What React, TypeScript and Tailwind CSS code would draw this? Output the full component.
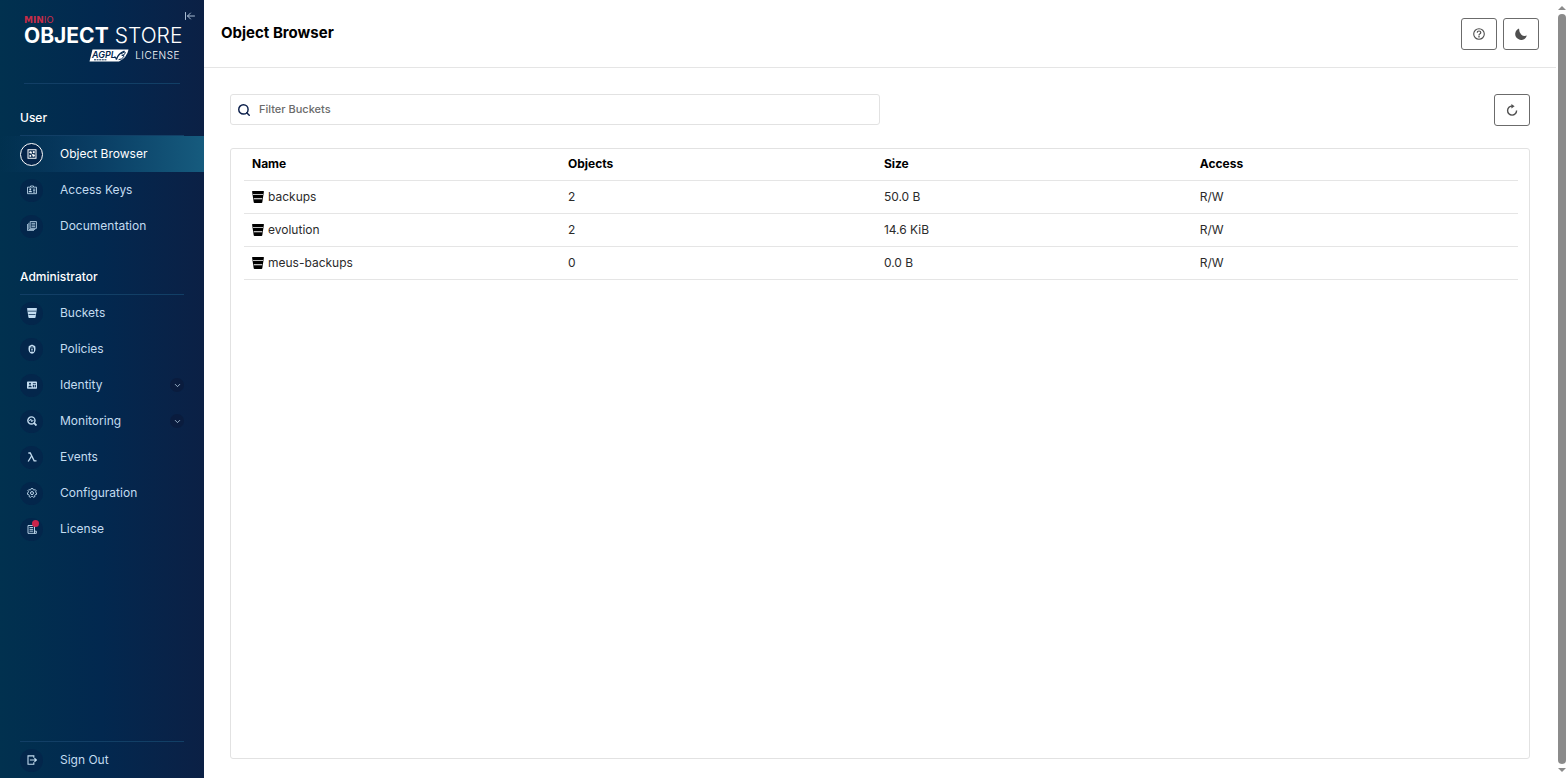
import React from "react";
import { ArrowLeftToLine, ChevronDown, Search } from "lucide-react";

type IconProps = { className?: string };

/* ── Icons ── */

function BucketIcon({ className }: IconProps) {
  return (
    <svg viewBox="0 0 12 12" className={className} fill="currentColor" aria-hidden="true">
      <path
        fillRule="evenodd"
        d="M0.6 0H11.4Q12 0 11.9 0.7L10.3 11.2Q10.2 12 9.4 12H2.6Q1.8 12 1.7 11.2L0.1 0.7Q0 0 0.6 0ZM1 3.2V4.1H11V3.2ZM1.8 7.3V8.2H10.2V7.3Z"
      />
    </svg>
  );
}

function ObjectBrowserIcon({ className }: IconProps) {
  return (
    <svg viewBox="0 0 12 12" className={className} fill="none" stroke="currentColor" aria-hidden="true">
      <rect x="1.2" y="0.9" width="9.6" height="10.2" strokeWidth="1.2" />
      <circle cx="4.3" cy="4" r="1.4" fill="currentColor" stroke="none" />
      <path d="M7 2.6H9.2V5H7Z" fill="currentColor" stroke="none" />
      <path d="M5 5.4L7.4 7.2" strokeWidth="1" />
      <circle cx="7.9" cy="7.9" r="1.5" fill="currentColor" stroke="none" />
      <path d="M3 7H5V9.4H3Z" fill="currentColor" stroke="none" />
    </svg>
  );
}

function AccessKeysIcon({ className }: IconProps) {
  return (
    <svg viewBox="0 0 12 12" className={className} fill="none" stroke="currentColor" aria-hidden="true">
      <path d="M0.6 2.6H4.2V1.2H7.8V2.6H11.4V10.4H0.6Z" strokeWidth="1" />
      <circle cx="3.9" cy="5.2" r="1.2" fill="currentColor" stroke="none" />
      <path d="M1.8 8.8Q1.8 6.7 3.9 6.7T6 8.8Z" fill="currentColor" stroke="none" />
      <path d="M5.2 3.2H6.8M7.2 5H10M7.2 6.8H10M7.2 8.6H10" strokeWidth="1" />
    </svg>
  );
}

function DocumentationIcon({ className }: IconProps) {
  return (
    <svg viewBox="0 0 12 12" className={className} fill="none" stroke="currentColor" aria-hidden="true">
      <path d="M3.8 0.7H11.3V8.8H3.8Z" strokeWidth="1" />
      <path d="M2.2 2.2V10.2H9.8" strokeWidth="0.9" />
      <path d="M0.6 3.6V11.5H8.4" strokeWidth="0.9" />
      <path d="M5.4 2.8H9.8M5.4 4.8H9.8M5.4 6.8H9.8" strokeWidth="1" />
    </svg>
  );
}

function PoliciesIcon({ className }: IconProps) {
  return (
    <svg viewBox="0 0 12 12" className={className} aria-hidden="true">
      <path
        fill="currentColor"
        fillRule="evenodd"
        d="M6 0.6C7.2 1.6 8.6 1.8 9.8 2.4C10.8 6 10.2 9.8 7.8 11.2Q6 12 4.2 11.2C1.8 9.8 1.2 6 2.2 2.4C3.4 1.8 4.8 1.6 6 0.6ZM6 2.6A1.9 1.9 0 0 0 4.1 4.5V5.2H3.6V9.3H8.4V5.2H7.9V4.5A1.9 1.9 0 0 0 6 2.6Z"
      />
      <path d="M5.3 4.6H6.7M4.8 6.4H7.2M5.2 8.2H6.8" stroke="currentColor" strokeWidth="1" />
    </svg>
  );
}

function IdentityIcon({ className }: IconProps) {
  return (
    <svg viewBox="0 0 12 12" className={className} aria-hidden="true">
      <path
        fill="currentColor"
        fillRule="evenodd"
        d="M0.9 1.8H11.1Q12 1.8 12 2.7V9.5Q12 10.4 11.1 10.4H0.9Q0 10.4 0 9.5V2.7Q0 1.8 0.9 1.8ZM3.6 3.4A1.2 1.2 0 1 0 3.6 5.8A1.2 1.2 0 1 0 3.6 3.4ZM1.6 8.6H5.8Q5.6 6.5 3.7 6.5T1.6 8.6ZM7 3.6V4.6H10.6V3.6ZM7 5.7V8.6H8.3V5.7ZM9.2 5.7V8.6H10.6V5.7Z"
      />
    </svg>
  );
}

function MonitoringIcon({ className }: IconProps) {
  return (
    <svg viewBox="0 0 12 12" className={className} fill="none" stroke="currentColor" aria-hidden="true">
      <circle cx="5.3" cy="5.3" r="4.3" strokeWidth="1.7" />
      <path d="M8 8L11.4 11.4" strokeWidth="2.2" />
      <path d="M2.6 5.3H3.8L4.6 3.6L5.8 7L6.6 5.3H7.8" strokeWidth="1.1" />
    </svg>
  );
}

function EventsIcon({ className }: IconProps) {
  return (
    <svg viewBox="0 0 12 12" className={className} fill="none" stroke="currentColor" aria-hidden="true">
      <path d="M1.6 1.2H3.9L8.6 10.7H11.4" strokeWidth="1.6" />
      <path d="M5.5 4.8L1.4 11.4" strokeWidth="1.6" />
    </svg>
  );
}

function ConfigurationIcon({ className }: IconProps) {
  return (
    <svg viewBox="0 0 12 12" className={className} fill="none" stroke="currentColor" aria-hidden="true">
      <path
        d="M5 0.6H7L7.4 2L8.5 2.5L9.8 1.8L11.1 3.4L10.3 4.6L10.5 5.4L11.6 6L11.2 7.9L9.9 8L9.3 8.9L9.6 10.2L7.9 11.1L6.9 10.2H5.3L4.2 11.2L2.4 10.2L2.7 8.9L2.1 8L0.8 7.8L0.4 5.9L1.6 5.3L1.8 4.4L1 3.3L2.3 1.8L3.6 2.5L4.6 2Z"
        strokeWidth="1.1"
      />
      <circle cx="6" cy="6.1" r="1.8" strokeWidth="1.2" />
    </svg>
  );
}

function LicenseIcon({ className }: IconProps) {
  return (
    <svg viewBox="0 0 12 12" className={className} fill="none" stroke="currentColor" aria-hidden="true">
      <path d="M1.2 1.8H9V11.2H1.2Z" strokeWidth="1.1" />
      <path d="M9 8.6H11.2V11.2H8.4" strokeWidth="1.1" />
      <path d="M3 4.2H7.4M3 6.4H7.4M3 8.6H7.4" strokeWidth="1.1" />
    </svg>
  );
}

function SignOutIcon({ className }: IconProps) {
  return (
    <svg viewBox="0 0 12 12" className={className} fill="none" stroke="currentColor" aria-hidden="true">
      <path d="M8.2 3.4V1H1.2V11H8.2V8.6" strokeWidth="1.3" />
      <path d="M3.4 6H11M8.9 3.9L11.2 6L8.9 8.1" strokeWidth="1.4" />
    </svg>
  );
}

function HelpIcon({ className }: IconProps) {
  return (
    <svg viewBox="0 0 12 12" className={className} fill="none" stroke="currentColor" aria-hidden="true">
      <circle cx="6" cy="6" r="5.3" strokeWidth="1.1" />
      <path d="M4.2 4.6Q4.3 3 6 3T7.8 4.6Q7.8 5.6 6.7 6Q6 6.3 6 7.4" strokeWidth="1.2" />
      <path d="M6 8.1V9.4" strokeWidth="1.3" />
    </svg>
  );
}

function MoonIcon({ className }: IconProps) {
  return (
    <svg viewBox="0 0 12 12" className={className} fill="currentColor" aria-hidden="true">
      <path d="M4 0.5A5.9 5.9 0 1 0 11.8 7.6Q8.4 8.6 6.2 6.4T4 0.5Z" />
    </svg>
  );
}

function RefreshIcon({ className }: IconProps) {
  return (
    <svg viewBox="0 0 12 12" className={className} fill="none" stroke="currentColor" aria-hidden="true">
      <path d="M6.2 2.1A4.5 4.5 0 1 0 10.6 6.6" strokeWidth="1.4" />
      <path d="M5.4 0L8.6 2.2L5.4 4.6Z" fill="currentColor" stroke="none" />
    </svg>
  );
}

/* ── Data ── */

type NavItem = {
  label: string;
  icon: React.ComponentType<IconProps>;
  active?: boolean;
  expandable?: boolean;
  badge?: boolean;
};

const userItems: NavItem[] = [
  { label: "Object Browser", icon: ObjectBrowserIcon, active: true },
  { label: "Access Keys", icon: AccessKeysIcon },
  { label: "Documentation", icon: DocumentationIcon },
];

const adminItems: NavItem[] = [
  { label: "Buckets", icon: BucketIcon },
  { label: "Policies", icon: PoliciesIcon },
  { label: "Identity", icon: IdentityIcon, expandable: true },
  { label: "Monitoring", icon: MonitoringIcon, expandable: true },
  { label: "Events", icon: EventsIcon },
  { label: "Configuration", icon: ConfigurationIcon },
  { label: "License", icon: LicenseIcon, badge: true },
];

const buckets = [
  { name: "backups", objects: 2, size: "50.0 B", access: "R/W" },
  { name: "evolution", objects: 2, size: "14.6 KiB", access: "R/W" },
  { name: "meus-backups", objects: 0, size: "0.0 B", access: "R/W" },
];

/* ── Sidebar ── */

function Logo() {
  return (
    <div className="pt-4 pl-6 text-white">
      <div className="font-['DejaVu_Sans',sans-serif] text-[9px] leading-[8px] font-bold text-[#c72c48]">
        MIN<span className="font-normal">IO</span>
      </div>
      <div className="flex gap-1.5 text-[21px] leading-6 whitespace-nowrap">
        <span className="font-bold">OBJECT</span>
        <span className="font-light">STORE</span>
      </div>
      <div className="mr-6 flex h-3.5 items-center justify-end gap-1.5">
        <svg viewBox="0 0 40 13" className="h-[13px] w-10" role="img" aria-label="AGPLv3">
          <path d="M3.5 0.5H39.5Q38 8.5 30 12.5H0.5Z" fill="#fff" />
          <text x="3" y="8.8" fontSize="9" fontWeight="600" fontStyle="italic" fill="#04284f">
            AGPL
          </text>
          <path d="M5 10.8H18" stroke="#04284f" strokeWidth="1" strokeDasharray="2 0.6" />
          <path d="M25.5 7.5Q27 8 27.4 10.6Q29 4.6 35.5 2.2" stroke="#04284f" strokeWidth="1.3" fill="none" />
          <path d="M32 5Q36.8 1.6 36.2 4T32.8 6.4Q36 5.8 34.4 8.2T29.6 10.6" stroke="#04284f" strokeWidth="1" fill="none" />
        </svg>
        <span className="text-[10px] font-light tracking-wider">LICENSE</span>
      </div>
    </div>
  );
}

function NavLink({ item }: { item: NavItem }) {
  const Icon = item.icon;
  return (
    <li>
      <a
        href="#"
        className={
          item.active
            ? "flex h-9 items-center bg-linear-to-r from-transparent via-[#0a3f65] to-[#165b7e] px-5 text-white"
            : "flex h-9 items-center px-5 text-[#c3dcf0]"
        }
      >
        <span
          className={
            item.active
              ? "relative flex size-[23px] items-center justify-center rounded-full border border-white bg-[#05254a]"
              : "relative flex size-[23px] items-center justify-center rounded-full bg-[#03264b]"
          }
        >
          <Icon className="size-[10px]" />
          {item.badge && <span className="absolute top-0.5 right-1 size-[7px] rounded-full bg-[#c9254b]" />}
        </span>
        <span className="ml-[17px] flex-1">{item.label}</span>
        {item.expandable && (
          <span className="flex size-[14px] items-center justify-center rounded-full bg-[#0a1c3e]">
            <ChevronDown className="size-[9px]" />
          </span>
        )}
      </a>
    </li>
  );
}

function NavGroup({ title, items }: { title: string; items: NavItem[] }) {
  return (
    <section>
      <h2 className="mx-5 flex h-[35px] items-center border-b border-[#123f66] font-medium text-white">
        {title}
      </h2>
      <ul>
        {items.map((item) => (
          <NavLink key={item.label} item={item} />
        ))}
      </ul>
    </section>
  );
}

function Sidebar() {
  return (
    <aside className="relative flex w-[204px] shrink-0 flex-col bg-linear-to-r from-[#01314f] via-[#02284f] to-[#0b2045] text-[12px]">
      <button type="button" aria-label="Collapse menu" className="absolute top-2.5 right-2 text-[#a9bdd3]">
        <ArrowLeftToLine className="size-3" strokeWidth={2} />
      </button>
      <Logo />
      <div className="mx-6 mt-[21px] border-b border-[#123f66]" />
      <nav className="mt-[17px] flex flex-1 flex-col gap-4">
        <NavGroup title="User" items={userItems} />
        <NavGroup title="Administrator" items={adminItems} />
      </nav>
      <div className="mx-5 border-b border-[#123f66]" />
      <ul>
        <NavLink item={{ label: "Sign Out", icon: SignOutIcon }} />
      </ul>
    </aside>
  );
}

/* ── Main area ── */

function IconButton({ label, children }: { label: string; children: React.ReactNode }) {
  return (
    <button
      type="button"
      aria-label={label}
      className="flex h-8 w-9 items-center justify-center rounded-[3px] border border-[#6b6b6b] bg-white text-[#4f4f4f]"
    >
      {children}
    </button>
  );
}

function BucketTable() {
  return (
    <table className="w-full table-fixed border-collapse text-left">
      <thead>
        <tr className="h-[31px] border-b border-[#e5e5e5]">
          <th className="w-[24.8%] px-2 font-bold">Name</th>
          <th className="w-[24.8%] px-2 font-bold">Objects</th>
          <th className="w-[24.8%] px-2 font-bold">Size</th>
          <th className="px-2 font-bold">Access</th>
        </tr>
      </thead>
      <tbody className="text-[#2b2b2b]">
        {buckets.map((bucket) => (
          <tr key={bucket.name} className="h-[33px] border-b border-[#e5e5e5]">
            <td className="px-2">
              <span className="flex items-center gap-1">
                <BucketIcon className="size-3 text-black" />
                {bucket.name}
              </span>
            </td>
            <td className="px-2">{bucket.objects}</td>
            <td className="px-2">{bucket.size}</td>
            <td className="px-2">{bucket.access}</td>
          </tr>
        ))}
      </tbody>
    </table>
  );
}

function ScrollTrack() {
  return (
    <div className="flex w-3 shrink-0 flex-col items-center justify-between py-1.5 text-[#8b8b8b]" aria-hidden="true">
      <svg viewBox="0 0 8 4" className="h-1 w-2" fill="currentColor">
        <path d="M4 0L8 4H0Z" />
      </svg>
      <div className="my-1 w-2 flex-1 rounded-full bg-[#8b8b8b]" />
      <svg viewBox="0 0 8 4" className="h-1 w-2" fill="currentColor">
        <path d="M0 0H8L4 4Z" />
      </svg>
    </div>
  );
}

export default function App() {
  return (
    <div className="flex min-h-screen bg-white font-['Inter',sans-serif] text-[12px] text-black">
      <Sidebar />
      <main className="flex min-w-0 flex-1 flex-col">
        <header className="flex h-[68px] items-center justify-between border-b border-[#e5e5e5] px-[17px]">
          <h1 className="text-[15px] font-bold">Object Browser</h1>
          <div className="flex gap-1.5">
            <IconButton label="Help">
              <HelpIcon className="size-3" />
            </IconButton>
            <IconButton label="Dark mode">
              <MoonIcon className="size-3" />
            </IconButton>
          </div>
        </header>

        <div className="flex flex-1 flex-col px-[26px] pt-[26px] pb-[19px]">
          <div className="flex items-start justify-between">
            <label className="flex h-[31px] w-1/2 items-center gap-2 rounded-[3px] border border-[#e2e2e2] px-1.5">
              <Search className="size-[14px] text-[#0b1f4b]" strokeWidth={2.5} />
              <input
                type="text"
                placeholder="Filter Buckets"
                aria-label="Filter Buckets"
                className="flex-1 text-[11px] font-medium outline-none placeholder:text-[#6b6b6b]"
              />
            </label>
            <IconButton label="Refresh">
              <RefreshIcon className="size-3" />
            </IconButton>
          </div>

          <div className="mt-[22px] flex-1 rounded-[3px] border border-[#e2e2e2] pr-[11px] pl-[13px]">
            <BucketTable />
          </div>
        </div>
      </main>
      <ScrollTrack />
    </div>
  );
}
